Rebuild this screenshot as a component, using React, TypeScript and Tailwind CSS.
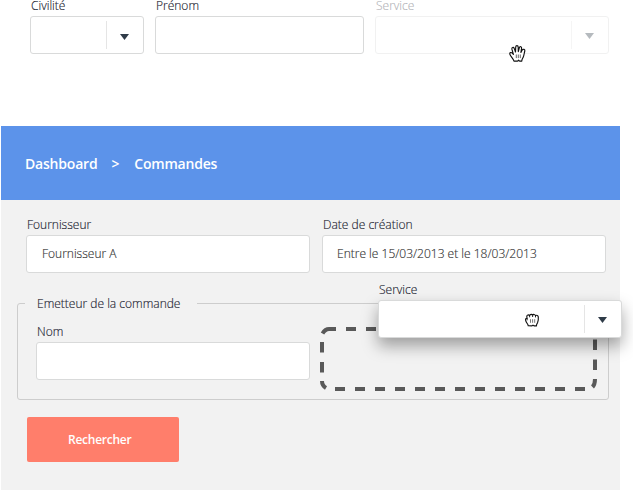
import type { ReactNode } from "react";

function Hand({ closed = false }: { closed?: boolean }) {
  return closed ? (
    <svg width="16" height="15" viewBox="0 0 16 15" className="block">
      <path
        d="M4.2 12.8C4.2 11 2.2 9.8 1.7 7.7C1.3 6 1.8 5.4 3 5.2L2.8 3.5C2.8 1.8 4.6 1.4 5.6 2.6C6 1.1 8.2 1.1 8.6 2.2C9.2 1.1 11 1.2 11.5 2.6C12.6 1.8 14.2 2.4 14.3 4C14.5 6.5 14.4 8 13.6 9.6C12.8 10.8 12.4 11.5 12.4 12.9H10L9 12.2L8 12.9Z"
        fill="#fff" stroke="#111" strokeWidth="1.15" strokeLinejoin="round"
      />
      <path d="M3.1 5v2.3M5.6 2.6v1.7M8.6 2.3v1.7M11.5 2.7v1.7" stroke="#111" strokeWidth=".9" />
      <path d="M6.5 6.2v3.6M8.6 6.2v3.6M10.7 6.2v3.6" stroke="#555" strokeWidth=".8" />
    </svg>
  ) : (
    <svg width="18" height="19" viewBox="0 0 18 19" className="block">
      <path
        d="M6 17.1C5.5 14.8 2.5 12.3 1.8 10.1C1.4 8.6 3.2 8 4.2 9.1L5.4 10.4L3.9 5.2C3.5 3.3 5.6 2.7 6.2 4.4L7.5 8L7.7 3C7.8 1.2 10.1 1.2 10.2 3L10.3 7.6L11.4 3.6C11.9 2 13.9 2.6 13.6 4.4L12.9 8.4L14.2 6C15 4.6 17.3 5.4 16.8 7C16.1 9.4 16.1 11 15.3 13C14.8 14.4 13.8 15.2 13.8 17.1H11.6L10.6 16.2L9.6 17.1Z"
        fill="#fff" stroke="#111" strokeWidth="1.15" strokeLinejoin="round"
      />
      <path d="M8.3 10.5v3.6M10.3 10.5v3.6M12.3 10.5v3.6" stroke="#444" strokeWidth=".8" />
    </svg>
  );
}

function Field({
  label,
  box,
  labelBox = "h-[20px] leading-[20px]",
  children,
}: {
  label: string;
  box: string;
  labelBox?: string;
  children?: ReactNode;
}) {
  return (
    <div className="flex flex-col">
      <span className={`pl-px text-[12px] whitespace-nowrap ${labelBox}`}>{label}</span>
      <div className={`flex h-[38px] items-center rounded-[3px] border border-[#d9dada] bg-white ${box}`}>
        {children}
      </div>
    </div>
  );
}

function Caret({ nudge = "mt-[2px]" }: { nudge?: string }) {
  return (
    <div className="ml-auto flex h-[28px] w-[37px] items-center justify-center border-l border-[#e5e5e5] pr-[2px]">
      <svg width="9" height="6" viewBox="0 0 9 6" className={`block ${nudge}`}>
        <path d="M0 0h9L4.5 6z" fill="#2f3b48" />
      </svg>
    </div>
  );
}

function DropZone() {
  return (
    <svg width="277" height="64" viewBox="0 0 277 64" fill="none" stroke="#595959" strokeWidth="4" className="block">
      <path d="M2.5 6.5C4 4 6 2 9 2H16" />
      <path d="M26 2H275" strokeDasharray="10 10" />
      <path d="M2 15V46" strokeDasharray="10.5 9.5" />
      <path d="M2 54C2 57 3.5 59.5 6 61" />
      <path d="M15 62H265" strokeDasharray="10 10" />
      <path d="M275 12.5V44" strokeDasharray="10.5 9.5" />
      <path d="M275 52C275 56 274.5 58 272.5 60" />
    </svg>
  );
}

export default function App() {
  return (
    <div className="relative h-[490px] w-[633px] overflow-hidden bg-white font-['Open_Sans',sans-serif] font-light text-[#1c2331] [-webkit-text-stroke:0.15px]">
      <div className="flex h-[126px] gap-[11px] pl-[30px]">
        <Field label="Civilité" labelBox="h-[16px] leading-[12px]" box="w-[114px]"><Caret nudge="mt-[3px]" /></Field>
        <Field label="Prénom" labelBox="h-[16px] leading-[12px]" box="w-[209px]" />
        <div className="opacity-35">
          <Field label="Service" labelBox="h-[16px] leading-[12px]" box="w-[234px]"><Caret nudge="mt-px" /></Field>
        </div>
      </div>
      <div className="ml-px w-[619px] bg-[#f2f2f2]">
        <nav className="flex h-[74px] items-center gap-[14px] bg-[#5c93ea] pl-[24px] text-[14px] font-semibold tracking-[-0.2px] text-white [-webkit-text-stroke:0px]">
          <span>Dashboard</span><span>&gt;</span><span className="ml-px">Commandes</span>
        </nav>
        <main className="h-[290px] pt-[15px] pl-[16px]">
          <div className="flex gap-[12px] pl-[9px]">
            <Field label="Fournisseur" box="w-[284px] pl-[15px] text-[12px] text-[#333]">Fournisseur A</Field>
            <Field label="Date de création" box="w-[284px] pl-[14px] text-[12px] text-[#333]">Entre le 15/03/2013 et le 18/03/2013</Field>
          </div>
          <fieldset className="mt-[21px] h-[106px] w-[592px] rounded-[3px] border border-[#cdcdcd] pl-[7px]">
            <legend className="h-[18px] w-[172px] pl-[12px] text-[12px] leading-[20px]">Emetteur de la commande</legend>
            <div className="flex items-start gap-[10px] pl-[11px]">
              <div className="mt-[10px]"><Field label="Nom" box="w-[274px]" /></div>
              <div className="mt-[15px]"><DropZone /></div>
            </div>
          </fieldset>
          <button className="mt-[17px] ml-[10px] flex h-[45px] w-[152px] items-center rounded-[2px] bg-[#ff7e6b] pl-[41px] text-[12px] font-semibold tracking-[-0.25px] text-white [-webkit-text-stroke:0px]">
            Rechercher
          </button>
        </main>
      </div>
      <div className="absolute top-[280px] left-[378px]">
        <Field label="Service" box="w-[244px] shadow-[0_8px_16px_rgba(0,0,0,0.35)]"><Caret /></Field>
      </div>
      <div className="absolute top-[44px] left-[508px]"><Hand /></div>
      <div className="absolute top-[313px] left-[524px]"><Hand closed /></div>
    </div>
  );
}
